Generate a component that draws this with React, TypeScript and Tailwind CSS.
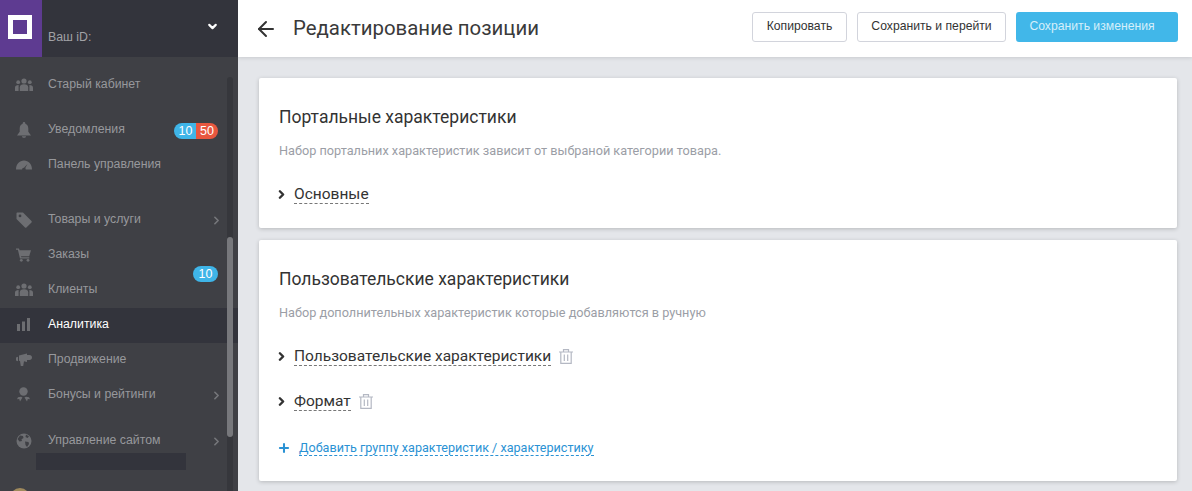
import React from 'react'
import { ChevronDown, ChevronRight, ArrowLeft, Plus } from 'lucide-react'

const Users = () => (
  <svg width="18" height="14" viewBox="0 0 18 14" fill="#6d6e72">
    <circle cx="9" cy="3" r="2.6" />
    <circle cx="3.2" cy="4.2" r="1.9" />
    <circle cx="14.8" cy="4.2" r="1.9" />
    <path d="M4.8 13V9.2C4.8 7.4 6.4 6.3 9 6.3s4.200 1.100 4.200 2.900V13z" />
    <path d="M0 13v-3.200C0 8 1.300 7 3.600 7v6zM18 13v-3.200C18 8 16.700 7 14.400 7v6z" />
  </svg>
)
const Bell = () => (
  <svg width="14" height="16" viewBox="0 0 14 16" fill="#6d6e72">
    <circle cx="7" cy="1.400" r="1.300" />
    <path d="M7 1.500c2.800 0 4.300 2.200 4.300 5v3.200L14 13.400H0l2.700-3.700V6.500c0-2.800 1.500-5 4.300-5z" />
    <path d="M5 14.200h4c0 1-.9 1.600-2 1.600s-2-.6-2-1.600z" />
  </svg>
)
const Gauge = () => (
  <svg width="16" height="10" viewBox="0 0 16 10" fill="#6d6e72">
    <path d="M0 9.500C0 4.200 3.500.5 8 .5s8 3.700 8 9H9.700c0-.5-.1-1-.4-1.400L11.500 4 8 7.800c-1-.2-1.900.6-1.900 1.700z" />
  </svg>
)
const Tag = () => (
  <svg width="16" height="16" viewBox="0 0 16 16" fill="#6d6e72">
    <path d="M.5 1.500C.5.900.900.500 1.500.500H7l8.500 8.500c.4.400.4 1 0 1.400l-5.100 5.100c-.4.400-1 .4-1.400 0L.5 7zM4 5.300a1.400 1.400 0 1 0 0-2.800 1.400 1.400 0 0 0 0 2.800z" fillRule="evenodd" />
  </svg>
)
const Cart = () => (
  <svg width="15" height="14" viewBox="0 0 15 14" fill="#6d6e72">
    <path d="M0 .5h3l.6 1.700H15l-1.800 6H5l.3 1h8v1.300H4L1.900 1.800H0z" />
    <circle cx="5.300" cy="12.300" r="1.400" />
    <circle cx="12" cy="12.300" r="1.400" />
  </svg>
)
const Bars = () => (
  <svg width="13" height="13" viewBox="0 0 13 13" fill="#6d6e72">
    <rect x="0" y="6" width="3" height="7" />
    <rect x="5" y="3.500" width="3" height="9.500" />
    <rect x="10" y="0" width="3" height="13" />
  </svg>
)
const Horn = () => (
  <svg width="16" height="13" viewBox="0 0 16 13" fill="#6d6e72">
    <path d="M0 4.500l2-.8v4.500L0 7.500z" />
    <path d="M3 2.500L11 .5V2h2.500c1.500 0 2.500 1 2.500 2.500S15 7 13.500 7H11v2L8 8.300 7.200 13H4.800L4 8 3 7.800z" />
  </svg>
)
const Medal = () => (
  <svg width="13" height="15" viewBox="0 0 13 15" fill="#6d6e72">
    <circle cx="6.500" cy="4.500" r="4.200" />
    <path d="M4 9.800L1 10.300 0 12.300l2.200-.2.800 2.300L5.500 10.400zM9 9.800l3 .5 1 2-2.200-.2-.8 2.300-2.500-4z" />
  </svg>
)
const Globe = () => (
  <svg width="16" height="16" viewBox="0 0 16 16">
    <circle cx="8" cy="8" r="7.500" fill="#6d6e72" />
    <path d="M4 2.500l3 .5.500 2-2 1.200.5 1.800-2.500.5-2-2.500zM9 8.500l3.500.5.500 2-2 3-1.500-2zM10 1.500l3 2-1.500 1.500-2-1z" fill="#3f4045" />
  </svg>
)
const Trash = () => (
  <svg width="14" height="15" viewBox="0 0 14 15" fill="none" stroke="#b4b8c3" strokeWidth="1.200">
    <path d="M0 3h14M4.500 3V.6h5V3M1.800 3v11.400h10.400V3M5.300 5.500v6.500M8.700 5.500v6.500" />
  </svg>
)

const Item = ({ icon, label, active, arrow, className = '' }: { icon: React.ReactNode; label: string; active?: boolean; arrow?: boolean; className?: string }) => (
  <div className={`flex h-[35px] items-center ${active ? 'bg-[#33343c] text-white' : 'text-[#97989c]'} ${className}`}>
    <span className="flex w-[48px] shrink-0 justify-center pr-[1px]">{icon}</span>
    <span className="text-[12.300px]">{label}</span>
    {arrow && <ChevronRight className="ml-auto mr-[15px] mt-[2px] text-[#76777b]" size={13} strokeWidth={3} />}
  </div>
)

const Group = ({ title, trash }: { title: string; trash?: boolean }) => (
  <div className="flex items-center text-[#333333]">
    <ChevronRight size={13} strokeWidth={4.500} className="ml-[-4px] mr-[6px]" />
    <span className="border-b border-dashed border-[#777777] text-[15.500px] leading-[18px]">{title}</span>
    {trash && <span className="ml-[8px]"><Trash /></span>}
  </div>
)

export default function App() {
  return (
    <div className="flex h-[491px] w-[1192px] overflow-hidden bg-[#e4e6ea] font-['Roboto',sans-serif]">
      <aside className="relative w-[238px] shrink-0 overflow-hidden bg-[#3f4045] font-['Liberation_Sans',sans-serif]">
        <div className="flex h-[57px] bg-[#33343c]">
          <div className="flex w-[42px] items-center justify-center bg-[#5e3b91] pb-[3px] pr-[2px]">
            <div className="h-[24px] w-[24px] border-[5px] border-white" />
          </div>
          <span className="ml-[6px] mt-[30px] text-[12.300px] leading-[15px] text-[#a1a2a6]">Ваш iD:</span>
          <ChevronDown className="ml-auto mr-[19px] mt-[20px] text-white" size={13} strokeWidth={4} />
        </div>

        <div className="mt-[10px]">
          <Item icon={<Users />} label="Старый кабинет" />
          <Item icon={<Bell />} label="Уведомления" className="mt-[10px]" />
          <Item icon={<Gauge />} label="Панель управления" />
          <Item icon={<Tag />} label="Товары и услуги" arrow className="mt-[21px] pb-[2px]" />
          <Item icon={<Cart />} label="Заказы" className="pb-[2px]" />
          <Item icon={<Users />} label="Клиенты" className="pb-[2px]" />
          <Item icon={<Bars />} label="Аналитика" active className="pb-[2px]" />
          <Item icon={<Horn />} label="Продвижение" className="pb-[2px]" />
          <Item icon={<Medal />} label="Бонусы и рейтинги" arrow className="pb-[2px]" />
          <Item icon={<Globe />} label="Управление сайтом" arrow className="mt-[10px]" />
        </div>
        <div className="ml-[36px] mt-[-5px] h-[17px] w-[150px] bg-[#33343c]" />

        <div className="absolute left-[174px] top-[123px] flex h-[16px] overflow-hidden rounded-full text-[12.500px] leading-[16px] text-white">
          <span className="w-[22px] bg-[#3fb5e8] pl-[1px] text-center">10</span>
          <span className="w-[22px] bg-[#e8573f] text-center">50</span>
        </div>
        <div className="absolute left-[193px] top-[266px] h-[16px] w-[25px] rounded-full bg-[#3fb5e8] text-center text-[12.500px] leading-[16px] text-white">10</div>

        <div className="absolute left-[227px] top-[77px] h-[414px] w-[6px] rounded-t-full bg-[#36373c]" />
        <div className="absolute left-[227px] top-[237px] h-[200px] w-[6px] rounded-full bg-[#77787c]" />
        <div className="absolute left-[10px] top-[488px] h-[20px] w-[20px] rounded-full bg-[#a08a5c]" />
      </aside>

      <main className="min-w-0 flex-1">
        <header className="flex h-[57px] items-center bg-white pl-[16px] pr-[14px] shadow-[0_1px_4px_rgba(0,0,0,0.12)]">
          <ArrowLeft className="text-[#333333]" size={24} strokeWidth={2} />
          <h1 className="ml-[15px] text-[20.400px] font-normal text-[#3a3a3a]">Редактирование позиции</h1>
          <div className="mb-[3px] ml-auto flex gap-[10px] font-['Liberation_Sans',sans-serif] text-[12.200px]">
            <button className="h-[30px] w-[95px] rounded-[3px] border border-[#d2d4dc] pb-[1px] text-[#333333]">Копировать</button>
            <button className="h-[30px] w-[149px] rounded-[3px] border border-[#d2d4dc] pb-[1px] text-[#333333]">Сохранить и перейти</button>
            <button className="h-[30px] w-[162px] rounded-[3px] bg-[#41b7e9] pb-[1px] pr-[10px] text-[#d5effa]">Сохранить изменения</button>
          </div>
        </header>

        <div className="ml-[21px] mr-[15px] mt-[21px] flex flex-col gap-[12px]">
          <section className="h-[150px] rounded-[2px] bg-white px-[20px] pt-[27px] shadow-[0_1px_4px_rgba(0,0,0,0.2)]">
            <h2 className="text-[17.500px] font-normal leading-[24px] text-[#333333]">Портальные характеристики</h2>
            <p className="mt-[13px] text-[12.700px] leading-[18px] text-[#9b9ea6]">Набор портальних характеристик зависит от выбраной категории товара.</p>
            <div className="mt-[25px]"><Group title="Основные" /></div>
          </section>

          <section className="h-[241px] rounded-[2px] bg-white px-[20px] pt-[27px] shadow-[0_1px_4px_rgba(0,0,0,0.2)]">
            <h2 className="text-[17.500px] font-normal leading-[24px] text-[#333333]">Пользовательские характеристики</h2>
            <p className="mt-[13px] text-[12.700px] leading-[18px] text-[#9b9ea6]">Набор дополнительных характеристик которые добавляются в ручную</p>
            <div className="mt-[25px]"><Group title="Пользовательские характеристики" trash /></div>
            <div className="mt-[26px]"><Group title="Формат" trash /></div>
            <div className="mt-[29px] flex items-center text-[#2a92d4]">
              <Plus size={14} strokeWidth={3.500} className="ml-[-2px] mr-[8px]" />
              <span className="border-b border-dashed border-[#2a92d4] text-[12.600px] leading-[15px]">Добавить группу характеристик / характеристику</span>
            </div>
          </section>
        </div>
      </main>
    </div>
  )
}
